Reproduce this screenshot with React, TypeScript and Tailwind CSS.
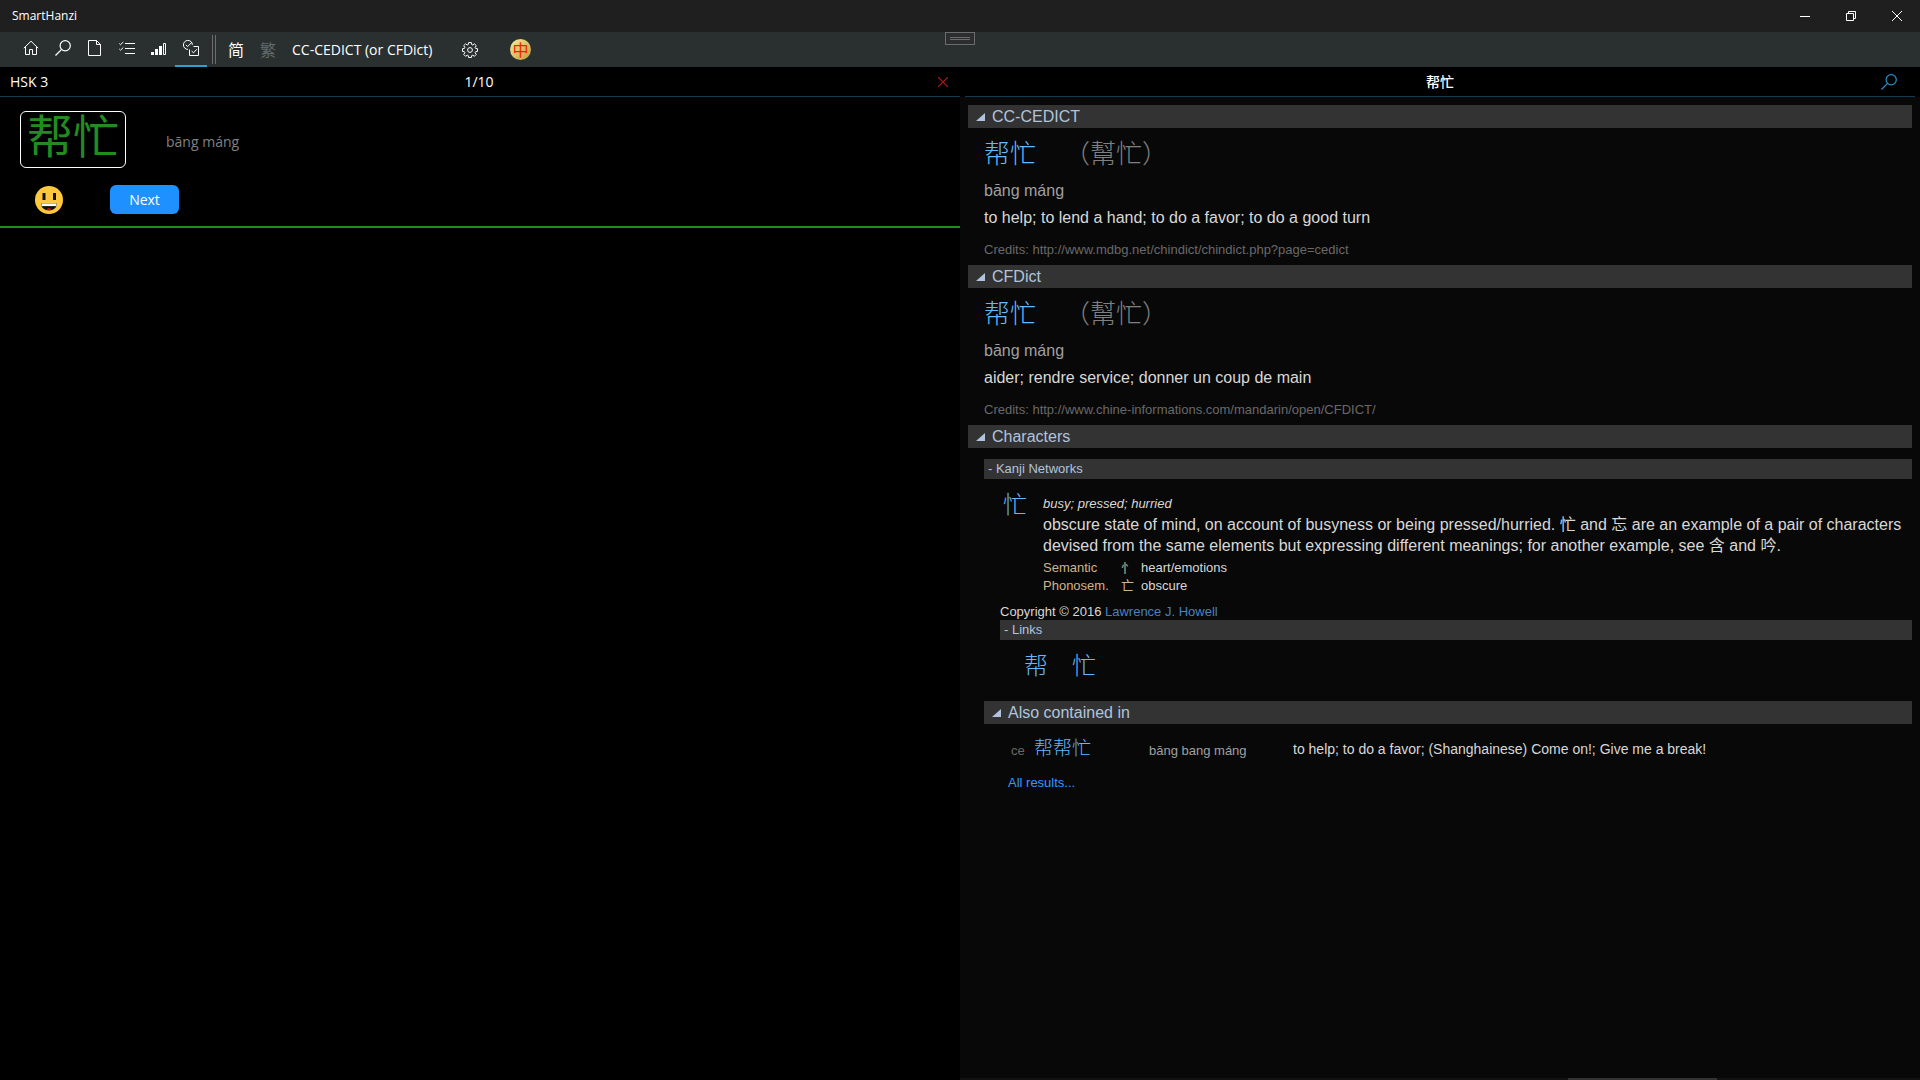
import clsx from 'clsx';
import { useState } from 'react';

import type { ReactNode } from 'react';

const Triangle = () => (
  <svg viewBox="0 0 9 8" className="h-2 w-[9px] shrink-0 fill-current">
    <path d="M9 0V8H0Z" />
  </svg>
);

const HomeIcon = () => (
  <svg viewBox="0 0 16 16" className="size-4 fill-none stroke-white">
    <path d="M.8 8.2 8 1.2l7.2 7M2.5 7v7.5h4V9.5h3v5h4V7" />
  </svg>
);

const SearchIcon = ({ className }: { className?: string }) => (
  <svg
    viewBox="0 0 16 16"
    className={clsx('size-4 fill-none stroke-current', className)}
  >
    <circle cx="10.2" cy="5.8" r="5.1" strokeWidth="1.2" />
    <path d="M6.6 9.4.5 15.5" strokeWidth="1.3" />
  </svg>
);

const PageIcon = () => (
  <svg viewBox="0 0 16 16" className="size-4 fill-none stroke-white">
    <path d="M1.5.5h8l4 4v11h-12zM9.5.5v4h4" />
  </svg>
);

const ListIcon = () => (
  <svg viewBox="0 0 16 16" className="size-4 fill-none stroke-white">
    <path d="M6 3.5h10M6 8.5h10M6 13.5h10" />
    <path d="m.3 3.5 1.2 1.2L4.3 2M.3 9l1.2 1.2 2.8-2.7" />
  </svg>
);

const BarsIcon = () => (
  <svg viewBox="0 0 16 16" className="size-4 fill-white stroke-white">
    <path d="M0 12h3v3H0zM4 9h3v6H4zM8 6h3v9H8z" stroke="none" />
    <path d="M12.5 3.5h2v11h-2z" fill="none" />
  </svg>
);

const QuizIcon = () => (
  <svg viewBox="0 0 16 16" className="size-4 fill-none stroke-white">
    <path d="M9.4 4.8A4.5 4.5 0 1 0 5 9.4M6.5 9.5v6h9v-9h-5" />
    <path d="m2.8 4.8 1.8 1.8L8.6 2.6M8.6 11l1.9 1.8 3.4-3.6" />
  </svg>
);

const GearIcon = () => (
  <svg
    viewBox="0 0 16 16"
    className="size-4 fill-none stroke-white"
    strokeLinejoin="round"
  >
    <path d="M6.6.6h2.8l.3 1.9 1.1.5 1.6-1.2 1.9 1.9-1.2 1.6.5 1.1 1.9.3v2.7l-1.9.3-.5 1.1 1.2 1.6-1.9 1.9-1.6-1.1-1.1.4-.3 1.9H6.6l-.3-1.9-1.1-.4-1.6 1.1-1.9-1.9 1.2-1.6-.5-1.1-1.9-.3V6.7l1.9-.3.5-1.1-1.2-1.6 1.9-1.9L5.2 3l1.1-.5z" />
    <circle cx="8" cy="8" r="2.4" />
  </svg>
);

const CoinIcon = () => (
  <span className="flex size-[21px] items-center justify-center rounded-full bg-linear-to-br from-[#f8ec9c] to-[#c09c30] text-base leading-none text-[#ff1a00]">
    中
  </span>
);

const SmileIcon = () => (
  <svg viewBox="0 0 28 28" className="size-7">
    <circle cx="14" cy="14" r="14" fill="#ffc83d" />
    <path d="M7.5 7h3v7h-3zM18 7h3v7h-3z" fill="#111" />
    <path d="M6 17.5h16c0 4-3.5 7-8 7s-8-3-8-7z" fill="#111" />
    <path d="M6.5 17.5h15v2.6h-15z" fill="#fff" />
    <path d="M11.5 23.4a2.8 2.2 0 0 1 5 0 8 8 0 0 1-5 0z" fill="#e81224" />
  </svg>
);

const tools = [
  { label: 'Home', icon: <HomeIcon /> },
  { label: 'Search', icon: <SearchIcon className="text-white" /> },
  { label: 'Document', icon: <PageIcon /> },
  { label: 'Lists', icon: <ListIcon /> },
  { label: 'Levels', icon: <BarsIcon /> },
  { label: 'Quiz', icon: <QuizIcon /> },
];

const TitleBar = () => (
  <header className="flex h-8 items-center bg-[#1f1f1f] pl-3">
    <h1 className="grow text-xs">SmartHanzi</h1>
    <button aria-label="Minimize" className="flex h-8 w-[46px] items-center justify-center">
      <svg viewBox="0 0 10 10" className="size-[10px] stroke-white">
        <path d="M0 5.5h10" />
      </svg>
    </button>
    <button aria-label="Restore" className="flex h-8 w-[46px] items-center justify-center">
      <svg viewBox="0 0 10 10" className="size-[10px] fill-none stroke-white">
        <path d="M.5 2.5h7v7h-7zM2.5 2.5v-2h7v7h-2" />
      </svg>
    </button>
    <button aria-label="Close" className="flex h-8 w-[46px] items-center justify-center">
      <svg viewBox="0 0 10 10" className="size-[10px] stroke-white">
        <path d="m0 0 10 10M10 0 0 10" />
      </svg>
    </button>
  </header>
);

const Toolbar = () => {
  const [active, setActive] = useState('Quiz');

  return (
    <nav className="relative flex h-[35px] items-center bg-[#29302f] pl-[15px]">
      {tools.map(({ label, icon }) => (
        <button
          key={label}
          aria-label={label}
          onClick={() => setActive(label)}
          className={clsx(
            'flex h-[35px] w-8 items-center justify-center border-b-2 pb-px',
            active === label ? 'border-[#2f9fd8]' : 'border-transparent'
          )}
        >
          {icon}
        </button>
      ))}
      <div className="mr-1 ml-[5px] h-[29px] w-1 border-x border-[#6f6b6b]" />
      <button className="w-8 text-base">简</button>
      <button className="w-8 text-base text-[#666b6b]">繁</button>
      <button className="ml-2 text-sm">CC-CEDICT (or CFDict)</button>
      <button aria-label="Settings" className="ml-[22px] flex w-8 justify-center">
        <GearIcon />
      </button>
      <button aria-label="About" className="ml-[18px] flex w-8 justify-center">
        <CoinIcon />
      </button>
      <div className="absolute top-0 left-1/2 flex h-[13px] w-[30px] -translate-x-1/2 items-center justify-center border border-[#6b6b6b] bg-[#2d2d30]">
        <div className="h-[3px] w-5 border-y border-[#6b6b6b]" />
      </div>
    </nav>
  );
};

const QuizPane = () => (
  <section className="w-1/2 bg-black">
    <div className="grid h-[30px] grid-cols-3 items-center border-b border-[#123a50] pr-3 pl-[10px] text-sm">
      <span>HSK 3</span>
      <span className="text-center">1/10</span>
      <button aria-label="Close quiz" className="justify-self-end">
        <svg viewBox="0 0 10 10" className="size-[10px] stroke-[#b01818]">
          <path d="m0 0 10 10M10 0 0 10" strokeWidth="1.2" />
        </svg>
      </button>
    </div>
    <div className="border-b-2 border-[#228b22] px-5 pt-[14px] pb-3">
      <div className="flex items-center gap-10">
        <div className="flex h-[57px] w-[106px] items-center justify-center rounded-md border border-white pb-2 text-[46px] text-[#228b22]">
          帮忙
        </div>
        <span className="pt-1 text-sm text-[#808080]">bāng máng</span>
      </div>
      <div className="mt-[17px] flex items-center gap-[47px] pl-[15px]">
        <SmileIcon />
        <button className="h-[29px] w-[69px] rounded-md bg-[#1e90ff] text-sm">
          Next
        </button>
      </div>
    </div>
  </section>
);

type SectionProps = { title: string; children: ReactNode };

const Section = ({ title, children }: SectionProps) => {
  const [open, setOpen] = useState(true);

  return (
    <section>
      <button
        onClick={() => setOpen(!open)}
        aria-expanded={open}
        className="flex h-[23px] w-full items-center gap-[7px] bg-[#333333] pl-2 text-base text-[#b0c4de]"
      >
        <Triangle />
        {title}
      </button>
      {open && children}
    </section>
  );
};

const SubHeading = ({ children }: { children: ReactNode }) => (
  <h3 className="h-5 bg-[#333333] pl-1 text-[13px] leading-[19px] text-[#b0c4de]">
    {children}
  </h3>
);

type EntryProps = { definition: string; credits: string };

const Entry = ({ definition, credits }: EntryProps) => (
  <div className="px-4 pt-[10px] pb-[5px]">
    <div className="flex h-8 items-center gap-7 text-[26px] font-light">
      <span className="text-[#63b8ff]">帮忙</span>
      <span className="text-[#808080]">（幫忙）</span>
    </div>
    <p className="mt-[11px] text-base leading-5 text-[#a0a0a0]">bāng máng</p>
    <p className="mt-[7px] text-base leading-5">{definition}</p>
    <p className="mt-3 text-[13px] leading-5 text-[#696969]">
      Credits: {credits}
    </p>
  </div>
);

const components = [
  { role: 'Semantic', part: '忄', meaning: 'heart/emotions' },
  { role: 'Phonosem.', part: '亡', meaning: 'obscure' },
];

const KanjiNetworks = () => (
  <div className="pt-[11px] pl-4">
    <SubHeading>- Kanji Networks</SubHeading>
    <div className="flex pt-[14px] pl-[19px]">
      <span className="w-10 shrink-0 text-2xl leading-6 font-light text-[#63b8ff]">
        忙
      </span>
      <div>
        <p className="text-[13px] leading-[21px] italic">
          busy; pressed; hurried
        </p>
        <p className="text-base leading-[21px]">
          obscure state of mind, on account of busyness or being
          pressed/hurried. 忙 and 忘 are an example of a pair of characters
          devised from the same elements but expressing different meanings; for
          another example, see 含 and 吟.
        </p>
        <table className="mt-[3px] text-[13px] leading-[18px]">
          <tbody>
            {components.map(({ role, part, meaning }) => (
              <tr key={role} className="h-[18px]">
                <td className="w-[78px] p-0 text-[#d2b48c]">{role}</td>
                <td className="w-5 p-0 text-[#d2b48c]">{part}</td>
                <td className="p-0">{meaning}</td>
              </tr>
            ))}
          </tbody>
        </table>
      </div>
    </div>
    <div className="pt-[9px] pl-4">
      <p className="text-[13px] leading-4">
        Copyright © 2016{' '}
        <a href="#howell" className="text-[#4682c4]">
          Lawrence J. Howell
        </a>
      </p>
      <SubHeading>- Links</SubHeading>
      <div className="flex gap-6 pt-[10px] pb-[19px] pl-6 text-2xl font-light text-[#63b8ff]">
        <a href="#bang">帮</a>
        <a href="#mang">忙</a>
      </div>
    </div>
  </div>
);

const AlsoContained = () => (
  <div className="pl-4">
    <Section title="Also contained in">
      <div className="flex items-center pt-[7px] pl-[27px] text-[13px] leading-8">
        <span className="w-[23px] pt-1 text-[#696969]">ce</span>
        <a
          href="#bangbangmang"
          className="w-[115px] text-[19px] font-light text-[#63b8ff]"
        >
          帮帮忙
        </a>
        <span className="w-36 pt-1 text-[#a0a0a0]">bāng bang máng</span>
        <span className="text-sm">
          to help; to do a favor; (Shanghainese) Come on!; Give me a break!
        </span>
      </div>
      <a
        href="#all"
        className="ml-6 inline-block pt-2 text-[13px] leading-4 text-[#3399ff]"
      >
        All results...
      </a>
    </Section>
  </div>
);

const DictionaryPane = () => (
  <section className="flex w-1/2 flex-col bg-[#080808]">
    <div className="bg-black px-[5px]">
      <div className="flex h-[30px] items-center border-b border-[#123a50] pr-[18px] pl-[34px]">
        <span className="grow text-center text-sm font-medium">帮忙</span>
        <button aria-label="Search dictionary">
          <SearchIcon className="text-[#2a8fc8]" />
        </button>
      </div>
    </div>
    <div className="grow px-2 pt-2 font-['Liberation_Sans','Noto_Sans_CJK_SC',sans-serif] text-[#d8d8d8]">
      <Section title="CC-CEDICT">
        <Entry
          definition="to help; to lend a hand; to do a favor; to do a good turn"
          credits="http://www.mdbg.net/chindict/chindict.php?page=cedict"
        />
      </Section>
      <Section title="CFDict">
        <Entry
          definition="aider; rendre service; donner un coup de main"
          credits="http://www.chine-informations.com/mandarin/open/CFDICT/"
        />
      </Section>
      <Section title="Characters">
        <KanjiNetworks />
        <AlsoContained />
      </Section>
    </div>
    <div className="h-[2px] bg-[#111111] pr-[203px]">
      <div className="ml-auto h-[2px] w-[149px] bg-[#333333]" />
    </div>
  </section>
);

const App = () => (
  <div className="flex min-h-screen flex-col bg-black font-['Open_Sans','Noto_Sans_CJK_SC',sans-serif] text-white">
    <TitleBar />
    <Toolbar />
    <main className="flex grow">
      <QuizPane />
      <DictionaryPane />
    </main>
  </div>
);

export default App;
